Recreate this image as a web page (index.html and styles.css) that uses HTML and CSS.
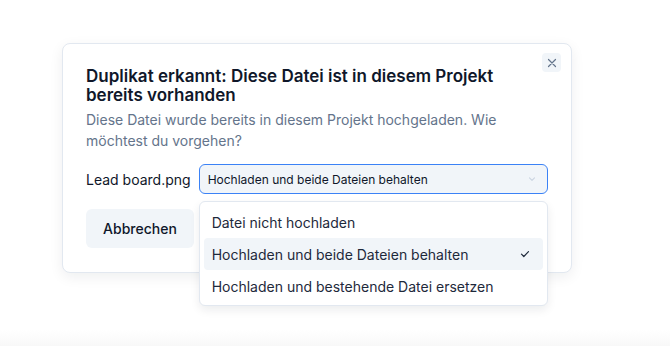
FILE: index.html
```html
<!DOCTYPE html>
<html lang="de">
<head>
    <meta charset="UTF-8">
    <meta name="viewport" content="width=device-width, initial-scale=1.0">
    <title>Duplikat erkannt</title>
    <link rel="stylesheet" href="styles.css">
</head>
<body>
    <div class="page">
        <div class="dialog">
            <button class="close" aria-label="Schließen">
                <svg width="10" height="10" viewBox="0 0 10 10"><path d="M1.5 1.5l7 7M8.5 1.5l-7 7" stroke="#64748b" stroke-width="1.2" stroke-linecap="round"/></svg>
            </button>
            <h2>Duplikat erkannt: Diese Datei ist in diesem Projekt bereits vorhanden</h2>
            <p class="desc">Diese Datei wurde bereits in diesem Projekt hochgeladen. Wie möchtest du vorgehen?</p>

            <div class="file-row">
                <span class="file-name">Lead board.png</span>
                <div class="select-wrap">
                    <div class="select">
                        <span>Hochladen und beide Dateien behalten</span>
                        <svg width="10" height="10" viewBox="0 0 10 10"><path d="M2.5 3.8L5 6.3l2.5-2.5" fill="none" stroke="#cbd5e1" stroke-width="1.1" stroke-linecap="round" stroke-linejoin="round"/></svg>
                    </div>
                    <ul class="menu">
                        <li>Datei nicht hochladen</li>
                        <li class="active">Hochladen und beide Dateien behalten
                            <svg width="12" height="12" viewBox="0 0 12 12"><path d="M2.5 6.2l2.3 2.3 4.7-4.9" fill="none" stroke="#1e293b" stroke-width="1.2" stroke-linecap="round" stroke-linejoin="round"/></svg>
                        </li>
                        <li>Hochladen und bestehende Datei ersetzen</li>
                    </ul>
                </div>
            </div>

            <div class="actions">
                <button class="btn">Abbrechen</button>
            </div>
        </div>
    </div>
    <div class="footer-strip"></div>
</body>
</html>
```

FILE: styles.css
```css
* {
    box-sizing: border-box;
}

body {
    margin: 0;
    font-family: Inter, "Noto Sans", sans-serif;
    background: #ffffff;
    color: #0f172a;
    height: 346px;
    overflow: hidden;
    position: relative;
}

.page {
    padding: 43px 0 0 62px;
}

.dialog {
    position: relative;
    width: 510px;
    height: 230px;
    background: #fff;
    border: 1px solid #e2e8f0;
    border-radius: 8px;
    box-shadow: 0 4px 14px rgba(15, 23, 42, 0.07);
    padding: 23px 23px;
}

.close {
    position: absolute;
    top: 9px;
    right: 10px;
    width: 19px;
    height: 19px;
    border: none;
    border-radius: 4px;
    background: #f1f5f9;
    display: flex;
    align-items: center;
    justify-content: center;
    padding: 0;
}

h2 {
    margin: 0;
    font-size: 17px;
    line-height: 19px;
    font-weight: 600;
    color: #0f172a;
    padding-right: 30px;
}

.desc {
    margin: 4px 0 0;
    font-size: 14px;
    line-height: 21px;
    color: #64748b;
}

.file-row {
    display: flex;
    align-items: center;
    gap: 8px;
    margin-top: 13px;
}

.file-name {
    font-size: 14px;
    color: #0f172a;
}

.select-wrap {
    position: relative;
    flex: 1;
}

.select {
    height: 30px;
    border: 1px solid #3b82f6;
    border-radius: 6px;
    background: #f1f5f9;
    display: flex;
    align-items: center;
    justify-content: space-between;
    padding: 0 10px 0 8px;
    font-size: 12px;
    color: #0f172a;
}

.menu {
    position: absolute;
    top: 37px;
    left: 0;
    right: 0;
    margin: 0;
    padding: 4px 4px 3px;
    list-style: none;
    background: #fff;
    border: 1px solid #e2e8f0;
    border-radius: 6px;
    box-shadow: 0 4px 10px rgba(15, 23, 42, 0.08);
    z-index: 2;
}

.menu li {
    display: flex;
    align-items: center;
    justify-content: space-between;
    height: 32px;
    padding: 0 12px 0 8px;
    font-size: 14px;
    color: #1e293b;
    border-radius: 4px;
}

.menu li.active {
    background: #f1f5f9;
}

.actions {
    margin-top: 15px;
}

.btn {
    width: 108px;
    height: 39px;
    border: none;
    border-radius: 6px;
    background: #f1f5f9;
    font-family: inherit;
    font-size: 14px;
    font-weight: 500;
    color: #0f172a;
}

.footer-strip {
    position: absolute;
    left: 0;
    right: 0;
    bottom: 0;
    height: 16px;
    background: linear-gradient(#fff, #f8f8f8);
}
```
